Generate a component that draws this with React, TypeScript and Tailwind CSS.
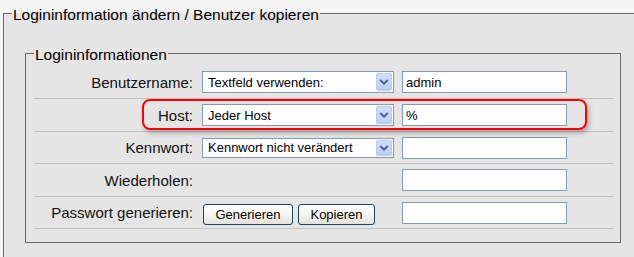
import type { JSX } from 'react'

type Row = {
  label: string
  select?: string
  selectHeight?: string
  value?: string
  buttons?: boolean
  height: string
}

const rows: Row[] = [
  { label: 'Benutzername:', select: 'Textfeld verwenden:', value: 'admin', height: 'h-[33px]' },
  { label: 'Host:', select: 'Jeder Host', value: '%', height: 'h-[33px]' },
  { label: 'Kennwort:', select: 'Kennwort nicht verändert', selectHeight: 'h-[20px]', value: '', height: 'h-[32px]' },
  { label: 'Wiederholen:', value: '', height: 'h-[33px]' },
  { label: 'Passwort generieren:', buttons: true, value: '', height: 'h-[32px]' },
]

function Chevron(): JSX.Element {
  return (
    <svg width="16" height="18" viewBox="0 0 16 18" className="block">
      <polyline
        points="4.5,7.5 8,11 11.5,7.5"
        fill="none"
        stroke="#4d6185"
        strokeWidth="2.2"
        strokeLinecap="square"
      />
    </svg>
  )
}

function FakeSelect({ text, height }: { text: string; height?: string }): JSX.Element {
  return (
    <div
      className={`flex w-[192px] ${height ?? 'h-[22px]'} items-center border border-[#7f9db9] bg-white p-[1px]`}
    >
      <span className="flex-1 truncate pl-[4px] text-[13px] leading-none text-black">{text}</span>
      <div className="flex h-full w-[16px] items-center justify-center rounded-[2px] border border-[#b9c9f4] bg-gradient-to-b from-[#d0ddfd] to-[#b9cbf8]">
        <Chevron />
      </div>
    </div>
  )
}

function XpButton({ children, width }: { children: string; width: string }): JSX.Element {
  return (
    <button
      type="button"
      className={`${width} h-[21px] rounded-[3px] border border-[#1f3f6f] bg-gradient-to-b from-[#ffffff] via-[#f6f5f1] to-[#e3e1d8] text-[13px] leading-none text-black`}
    >
      {children}
    </button>
  )
}

export default function App(): JSX.Element {
  return (
    <div className="relative h-[257px] w-[634px] overflow-hidden bg-[#f5f5f5] font-['Liberation_Sans',Arial,sans-serif] text-black">
      <fieldset className="ml-[3px] mt-[4px] h-[300px] w-[680px] border border-[#6b6b6b] bg-[#e5e5e5] px-[8px] pt-[22px]">
        <legend className="px-[1px] text-[15.5px] leading-[18px]">
          <span className="relative top-[2px]">Logininformation ändern / Benutzer kopieren</span>
        </legend>

        <fieldset className="ml-[13px] w-[596px] border border-[#6b6b6b] pb-[13px] pl-[8px] pr-[7px] pt-[4px]">
          <legend className="px-[1px] text-[15.5px] leading-[18px]">
            <span className="relative top-[2px]">Logininformationen</span>
          </legend>

          {rows.map((row) => (
            <div key={row.label} className={`flex ${row.height} items-center border-b border-[#c2c2c2]`}>
              <div className="w-[159px] text-right text-[15px] leading-none text-[#111]">{row.label}</div>
              <div className="ml-[9px] flex w-[192px] items-center">
                {row.select && <FakeSelect text={row.select} height={row.selectHeight} />}
                {row.buttons && (
                  <div className="ml-[1px] mt-[3px] flex gap-[5px]">
                    <XpButton width="w-[90px]">Generieren</XpButton>
                    <XpButton width="w-[77px]">Kopieren</XpButton>
                  </div>
                )}
              </div>
              <div className="ml-[8px] flex h-[22px] w-[165px] items-center border border-[#7f9db9] bg-white pl-[3px] text-[13px] leading-none">
                {row.value}
              </div>
            </div>
          ))}
        </fieldset>
      </fieldset>

      <div className="pointer-events-none absolute left-[142px] top-[99px] h-[31px] w-[445px] rounded-[8px] border-2 border-[#ff0000] shadow-[2px_3px_5px_rgba(0,0,0,0.28)]" />
    </div>
  )
}
